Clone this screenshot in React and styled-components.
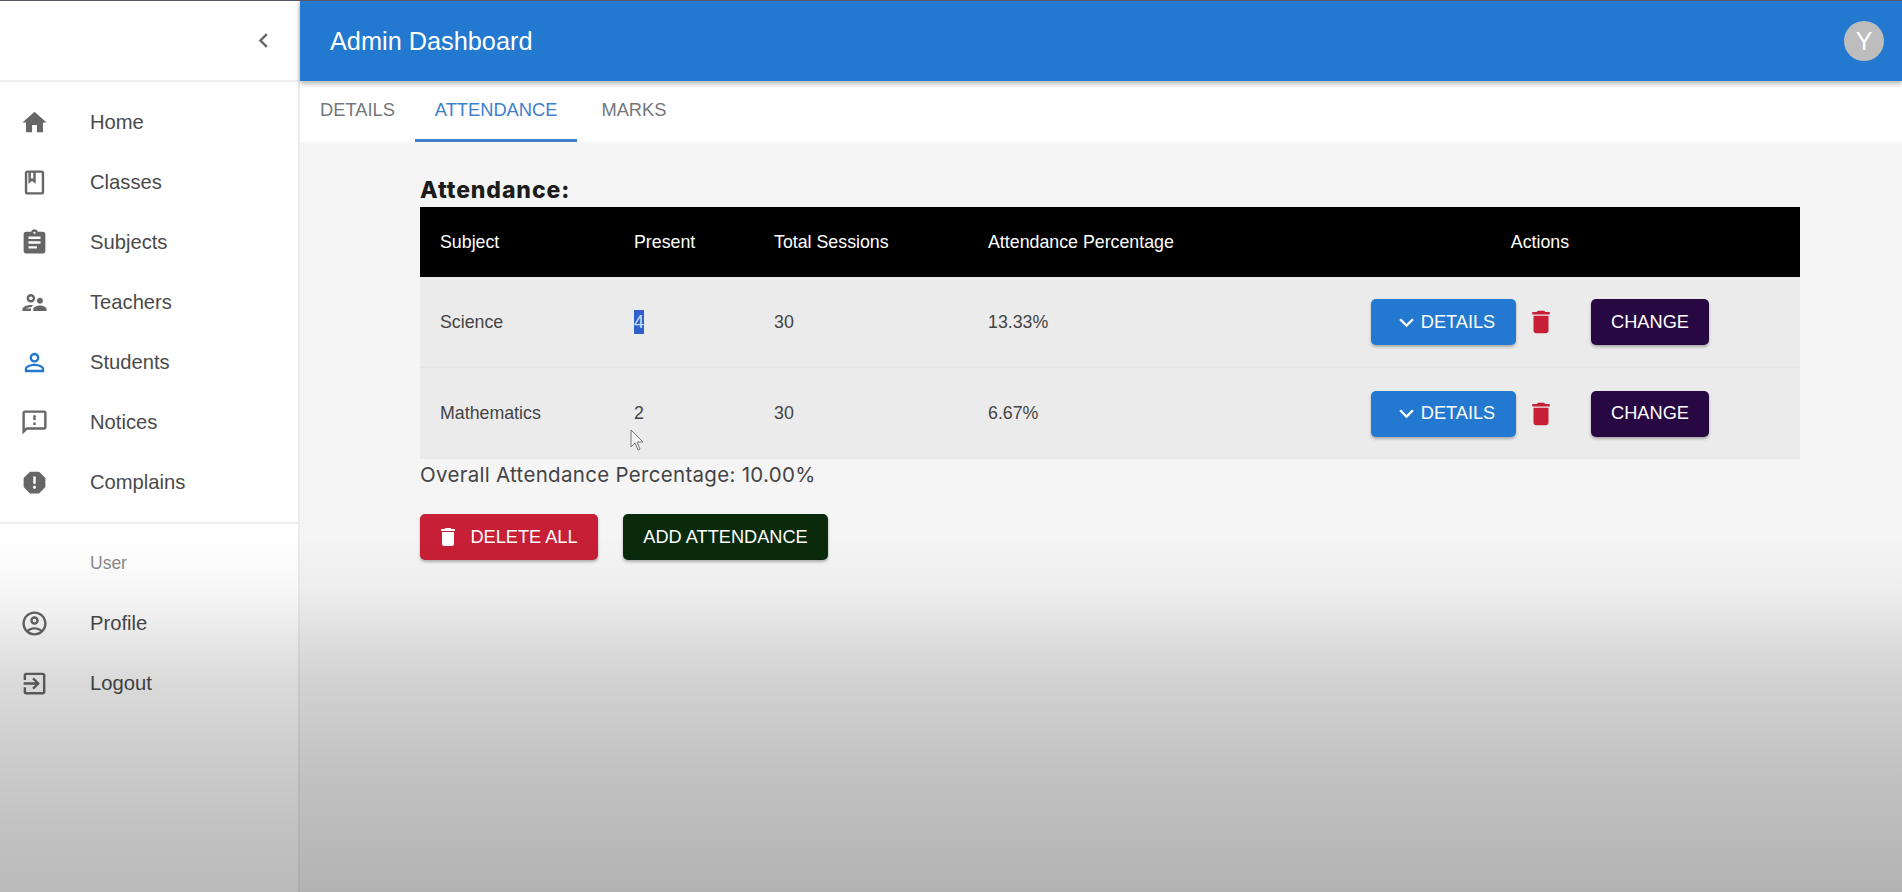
import React from 'react';
import styled, { createGlobalStyle } from 'styled-components';

const Global = createGlobalStyle`
  html, body { margin: 0; padding: 0; height: 100%; }
  body { font-family: "Liberation Sans", Arial, sans-serif; background: #fff; overflow: hidden; }
  * { box-sizing: border-box; }
`;

const Page = styled.div`
  position: relative; width: 1902px; height: 892px; display: flex; overflow: hidden; background: #f5f5f6;
  border-top: 1px solid #556;
`;
const Fade = styled.div`
  position: absolute; inset: 0; pointer-events: none; z-index: 5;
  background: linear-gradient(to bottom, rgba(0,0,0,0) 60%, rgba(0,0,0,.03) 66%, rgba(0,0,0,.14) 76%, rgba(0,0,0,.21) 87%, rgba(0,0,0,.27) 100%);
`;
const Sidebar = styled.aside`
  width: 300px; flex: none; background: #fff; border-right: 2px solid #ececec; display: flex; flex-direction: column;
`;
const SideTop = styled.div`
  height: 81px; display: flex; align-items: center; justify-content: flex-end; padding-right: 20px; border-bottom: 2px solid #eeeeee; color: #666;
`;
const NavList = styled.nav`
  padding: 10px 0 10px; display: flex; flex-direction: column;
`;
const NavItem = styled.div`
  height: 60px; display: flex; align-items: center; font-size: 20.2px; color: #4a4a4a;
`;
const NavIcon = styled.span`
  width: 90px; padding-left: 20px; flex: none; display: flex; color: ${p => p.$active ? '#2378cc' : '#666'};
`;
const Divider = styled.div` height: 2px; background: #eeeeee; `;
const SubHead = styled.div`
  height: 60px; margin-top: 9px; padding-left: 90px; display: flex; align-items: center; font-size: 17.5px; color: #8a8a8a;
`;
const Main = styled.main` flex: 1; min-width: 0; display: flex; flex-direction: column; `;
const Bar = styled.header`
  height: 80px; background: #2279cf; color: #fff; display: flex; align-items: center; justify-content: space-between;
  padding: 0 18px 0 30px; box-shadow: 0 3px 5px rgba(0,0,0,.28); position: relative; z-index: 2;
`;
const Title = styled.div` font-size: 25.3px; font-weight: 400; `;
const Avatar = styled.div`
  width: 40px; height: 40px; border-radius: 50%; background: #bdbdbd; color: #fff; display: flex; align-items: center; justify-content: center; font-size: 25px;
`;
const Tabs = styled.div` height: 61px; background: #fff; display: flex; `;
const Tab = styled.div`
  height: 61px; padding: 0 20px; display: flex; align-items: center; font-size: 18.3px;
  color: ${p => p.$active ? '#3f7fcb' : '#73777c'}; border-bottom: 3px solid ${p => p.$active ? '#3f7fcb' : 'transparent'};
  margin-left: ${p => p.$ml || 0}px;
`;
const Content = styled.section` padding: 31px 0 0 120px; width: 1500px; `;
const Heading = styled.h3`
  margin: 0; height: 34px; font: 800 23px/34px Inter, sans-serif; letter-spacing: .9px; color: #1c1c1c;
`;
const Table = styled.div` width: 1380px; `;
const Row = styled.div`
  display: grid; grid-template-columns: 194px 140px 214px 312px 1fr; align-items: center;
  height: ${p => p.$head ? 70 : 91}px; padding-left: 20px;
  background: ${p => p.$head ? '#000' : '#ebebec'}; color: ${p => p.$head ? '#fff' : '#444'};
  font: 17.8px "Liberation Sans", sans-serif;
  border-bottom: ${p => p.$line ? '1px solid #e5e5e6' : '0'};
`;
const Cell = styled.div``;
const ActionHead = styled.div` text-align: center; margin-left: -20px; `;
const Actions = styled.div` display: flex; align-items: center; justify-content: center; margin-left: -20px; `;
const Selected = styled.span` background: #2f5fc9; color: #cfe0ff; padding: 2px 0; `;
const Btn = styled.button`
  height: 46px; border: 0; border-radius: 5px; color: #fff; font: 18.2px "Liberation Sans", sans-serif; display: inline-flex; align-items: center; justify-content: center;
  box-shadow: 0 2px 3px rgba(0,0,0,.28); padding: 0 ${p => p.$pr || 0}px 0 0; gap: ${p => p.$gap || 0}px; background: ${p => p.$bg}; width: ${p => p.$w}px;
`;
const TrashBtn = styled.span`
  width: 75px; display: flex; justify-content: flex-start; padding-left: 10px; color: #c71f35;
`;
const Overall = styled.div`
  height: 31px; font: 400 20.5px/31px Inter, sans-serif; letter-spacing: .3px; color: #444;
`;
const Footer = styled.div` display: flex; gap: 25px; margin-top: 24px; `;
const Cursor = styled.svg` position: absolute; left: 630px; top: 428px; z-index: 4; `;

const I = ({ d, s = 29 }) => <svg width={s} height={s} viewBox="0 0 24 24" fill="currentColor"><path d={d} /></svg>;
const P = {
  chev: 'M15.41 7.41 14 6l-6 6 6 6 1.41-1.41L10.83 12z',
  home: 'M10 20v-6h4v6h5v-8h3L12 3 2 12h3v8z',
  cls: 'M18 2H6c-1.1 0-2 .9-2 2v16c0 1.1.9 2 2 2h12c1.1 0 2-.9 2-2V4c0-1.1-.9-2-2-2zM9 4h2v5l-1-.75L9 9V4zm9 16H6V4h1v9l3-2.25L13 13V4h5v16z',
  asg: 'M19 3h-4.18C14.4 1.84 13.3 1 12 1c-1.3 0-2.4.84-2.82 2H5c-1.1 0-2 .9-2 2v14c0 1.1.9 2 2 2h14c1.1 0 2-.9 2-2V5c0-1.1-.9-2-2-2zm-7 0c.55 0 1 .45 1 1s-.45 1-1 1-1-.45-1-1 .45-1 1-1zm2 14H7v-2h7v2zm3-4H7v-2h10v2zm0-4H7V7h10v2z',
  sup: 'M9 12c1.93 0 3.5-1.57 3.5-3.5S10.93 5 9 5 5.5 6.57 5.5 8.5 7.07 12 9 12zm0-5c.83 0 1.5.67 1.5 1.5S9.83 10 9 10s-1.5-.67-1.5-1.5S8.17 7 9 7zm.05 10H4.77c.99-.5 2.7-1 4.23-1 .11 0 .23.01.34.01.34-.73.93-1.33 1.64-1.81-.73-.13-1.42-.2-1.98-.2-2.34 0-7 1.17-7 3.5V19h7v-1.5c0-.17.02-.34.05-.5zm7.45-2.5c-1.84 0-5.5 1.01-5.5 3V19h11v-1.5c0-1.99-3.66-3-5.5-3zm1.21-1.82c.76-.43 1.29-1.24 1.29-2.18C19 9.12 17.88 8 16.5 8S14 9.12 14 10.5c0 .94.53 1.75 1.29 2.18.36.2.77.32 1.21.32s.85-.12 1.21-.32z',
  per: 'M12 5.9c1.16 0 2.1.94 2.1 2.1s-.94 2.1-2.1 2.1S9.9 9.16 9.9 8s.94-2.1 2.1-2.1m0 9c2.97 0 6.1 1.46 6.1 2.1v1.1H5.9V17c0-.64 3.13-2.1 6.1-2.1M12 4C9.79 4 8 5.79 8 8s1.79 4 4 4 4-1.79 4-4-1.79-4-4-4zm0 9c-2.67 0-8 1.34-8 4v3h16v-3c0-2.66-5.33-4-8-4z',
  ann: 'M20 2H4c-1.1 0-1.99.9-1.99 2L2 22l4-4h14c1.1 0 2-.9 2-2V4c0-1.1-.9-2-2-2zm0 14H5.17L4 17.17V4h16v12zm-9-4h2v2h-2zm0-6h2v4h-2z',
  rep: 'M15.73 3H8.27L3 8.27v7.46L8.27 21h7.46L21 15.73V8.27L15.73 3zM12 17.3c-.72 0-1.3-.58-1.3-1.3 0-.72.58-1.3 1.3-1.3.72 0 1.3.58 1.3 1.3 0 .72-.58 1.3-1.3 1.3zm1-4.3h-2V7h2v6z',
  acc: 'M12 2C6.48 2 2 6.48 2 12s4.48 10 10 10 10-4.48 10-10S17.52 2 12 2zM7.35 18.5C8.66 17.56 10.26 17 12 17s3.34.56 4.65 1.5c-1.31.94-2.91 1.5-4.65 1.5s-3.34-.56-4.65-1.5zm10.79-1.38C16.45 15.8 14.32 15 12 15s-4.45.8-6.14 2.12C4.7 15.73 4 13.95 4 12c0-4.42 3.58-8 8-8s8 3.58 8 8c0 1.95-.7 3.73-1.86 5.12zM12 6c-1.93 0-3.5 1.57-3.5 3.5S10.07 13 12 13s3.5-1.57 3.5-3.5S13.93 6 12 6zm0 5c-.83 0-1.5-.67-1.5-1.5S11.17 8 12 8s1.5.67 1.5 1.5S12.83 11 12 11z',
  exit: 'M10.09 15.59 11.5 17l5-5-5-5-1.41 1.41L12.67 11H3v2h9.67l-2.58 2.59zM19 3H5c-1.11 0-2 .9-2 2v4h2V5h14v14H5v-4H3v4c0 1.1.89 2 2 2h14c1.1 0 2-.9 2-2V5c0-1.1-.9-2-2-2z',
  del: 'M6 19c0 1.1.9 2 2 2h8c1.1 0 2-.9 2-2V7H6v12zM19 4h-3.5l-1-1h-5l-1 1H5v2h14V4z',
  down: 'M7.41 8.59 12 13.17l4.59-4.58L18 10l-6 6-6-6 1.41-1.41z',
};

const main = [['Home', P.home], ['Classes', P.cls], ['Subjects', P.asg], ['Teachers', P.sup], ['Students', P.per, true], ['Notices', P.ann], ['Complains', P.rep]];
const user = [['Profile', P.acc], ['Logout', P.exit]];
const rows = [
  { s: 'Science', p: '4', sel: true, t: '30', a: '13.33%' },
  { s: 'Mathematics', p: '2', t: '30', a: '6.67%' },
];

const Nav = ({ items }) => items.map(([t, d, a]) => (
  <NavItem key={t}><NavIcon $active={a}><I d={d} /></NavIcon>{t}</NavItem>
));

export default function App() {
  return (
    <Page>
      <Global />
      <Sidebar>
        <SideTop><I d={P.chev} /></SideTop>
        <NavList><Nav items={main} /></NavList>
        <Divider />
        <SubHead>User</SubHead>
        <Nav items={user} />
      </Sidebar>
      <Main>
        <Bar>
          <Title>Admin Dashboard</Title>
          <Avatar>Y</Avatar>
        </Bar>
        <Tabs>
          <Tab>DETAILS</Tab>
          <Tab $active>ATTENDANCE</Tab>
          <Tab $ml={4}>MARKS</Tab>
        </Tabs>
        <Content>
          <Heading>Attendance:</Heading>
          <Table>
            <Row $head>
              <Cell>Subject</Cell><Cell>Present</Cell><Cell>Total Sessions</Cell><Cell>Attendance Percentage</Cell>
              <ActionHead>Actions</ActionHead>
            </Row>
            {rows.map((r, i) => (
              <Row key={r.s} $line={i === 0}>
                <Cell>{r.s}</Cell>
                <Cell>{r.sel ? <Selected>{r.p}</Selected> : r.p}</Cell>
                <Cell>{r.t}</Cell>
                <Cell>{r.a}</Cell>
                <Actions>
                  <Btn $bg="#2279cf" $w={145}><I d={P.down} s={29} />DETAILS</Btn>
                  <TrashBtn><I d={P.del} s={30} /></TrashBtn>
                  <Btn $bg="#270843" $w={118}>CHANGE</Btn>
                </Actions>
              </Row>
            ))}
          </Table>
          <Overall>Overall Attendance Percentage: 10.00%</Overall>
          <Footer>
            <Btn $bg="#c71f35" $w={178} $gap={10} $pr={4}><I d={P.del} s={24} />DELETE ALL</Btn>
            <Btn $bg="#0a2a0c" $w={205}>ADD ATTENDANCE</Btn>
          </Footer>
        </Content>
      </Main>
      <Cursor width="14" height="22" viewBox="0 0 14 22"><path d="M1 1v17l4-4 3 7 2-1-3-7h6z" fill="#f4f4f4" stroke="#777" strokeWidth="1" /></Cursor>
      <Fade />
    </Page>
  );
}
